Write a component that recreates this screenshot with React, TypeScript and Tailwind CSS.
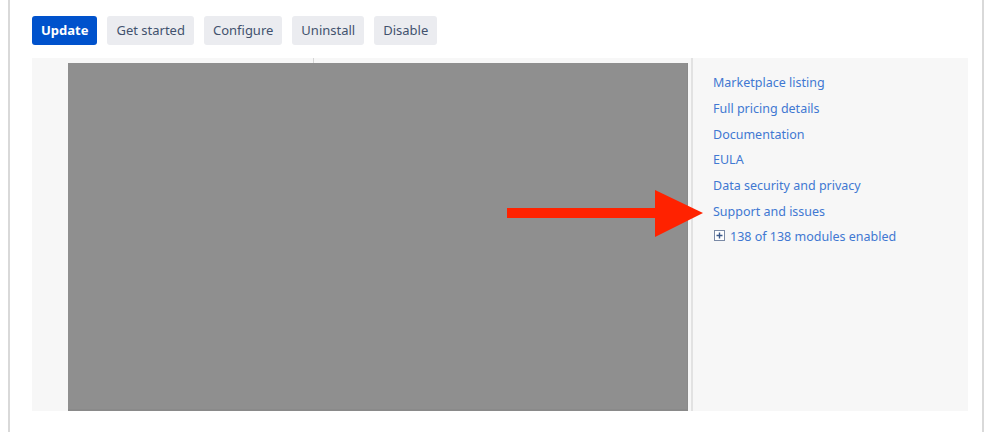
import React from 'react';

// Action buttons along the top of the app panel
const actions = ['Get started', 'Configure', 'Uninstall', 'Disable'];

// Links shown in the sidebar beside the screenshot
const links = [
    'Marketplace listing',
    'Full pricing details',
    'Documentation',
    'EULA',
    'Data security and privacy',
    'Support and issues',
];

const ExpandIcon = () => (
    <svg width="11" height="11" viewBox="0 0 11 11" className="shrink-0">
        <rect x="0.5" y="0.5" width="10" height="10" fill="#fff" stroke="#7a8aa6" />
        <path d="M5.5 2.5v6M2.5 5.5h6" stroke="#3d5a8a" strokeWidth="1.4" />
    </svg>
);

const Arrow = () => (
    <svg
        width="200"
        height="50"
        viewBox="0 0 200 50"
        className="absolute left-[506px] top-[189px] pointer-events-none"
    >
        <rect x="1" y="19" width="150" height="10" fill="#ff2200" />
        <polygon points="149,1 197,24 149,48" fill="#ff2200" />
    </svg>
);

export default function App() {
    return (
        <div
            className="relative w-[998px] h-[432px] bg-white overflow-hidden"
            style={{ fontFamily: '"Noto Sans", "Open Sans", sans-serif' }}
        >
            <div className="ml-[8px] w-[976px] h-full border-l-2 border-r-2 border-[#d9d9d9] pl-[22px] pt-[16px]">
                <div className="flex gap-[10px]">
                    <button className="h-[29px] pt-[1px] px-[9px] rounded-[3px] bg-[#0052cc] text-white text-[13px] font-bold">
                        Update
                    </button>
                    {actions.map(a => (
                        <button
                            key={a}
                            className="h-[29px] pt-[1px] px-[9px] rounded-[3px] bg-[#ebecf0] text-[#42526e] text-[13px]"
                        >
                            {a}
                        </button>
                    ))}
                </div>

                <div className="mt-[13px] w-[936px] h-[353px] bg-[#f7f7f7] flex">
                    <div className="w-[659px] pl-[36px] flex flex-col">
                        <div className="h-[5px] ml-[245px] border-l border-[#d6d6d6]" />
                        <div className="w-[620px] h-[350px] bg-[#8f8f8f] border-b-2 border-r border-[#8a8a8a]" />
                    </div>
                    <div className="w-[2px] h-full bg-[#e2e2e2]" />
                    <div className="flex-1 pl-[20px] pt-[12px] flex flex-col text-[12.5px] text-[#4178d2]">
                        {links.map(l => (
                            <a key={l} className="h-[25.8px] leading-[25.8px]">
                                {l}
                            </a>
                        ))}
                        <div className="h-[25.8px] flex items-center gap-[5px] pl-[1px]">
                            <div className="-mt-[4px]">
                                <ExpandIcon />
                            </div>
                            <span>138 of 138 modules enabled</span>
                        </div>
                    </div>
                </div>
            </div>
            <Arrow />
        </div>
    );
}
